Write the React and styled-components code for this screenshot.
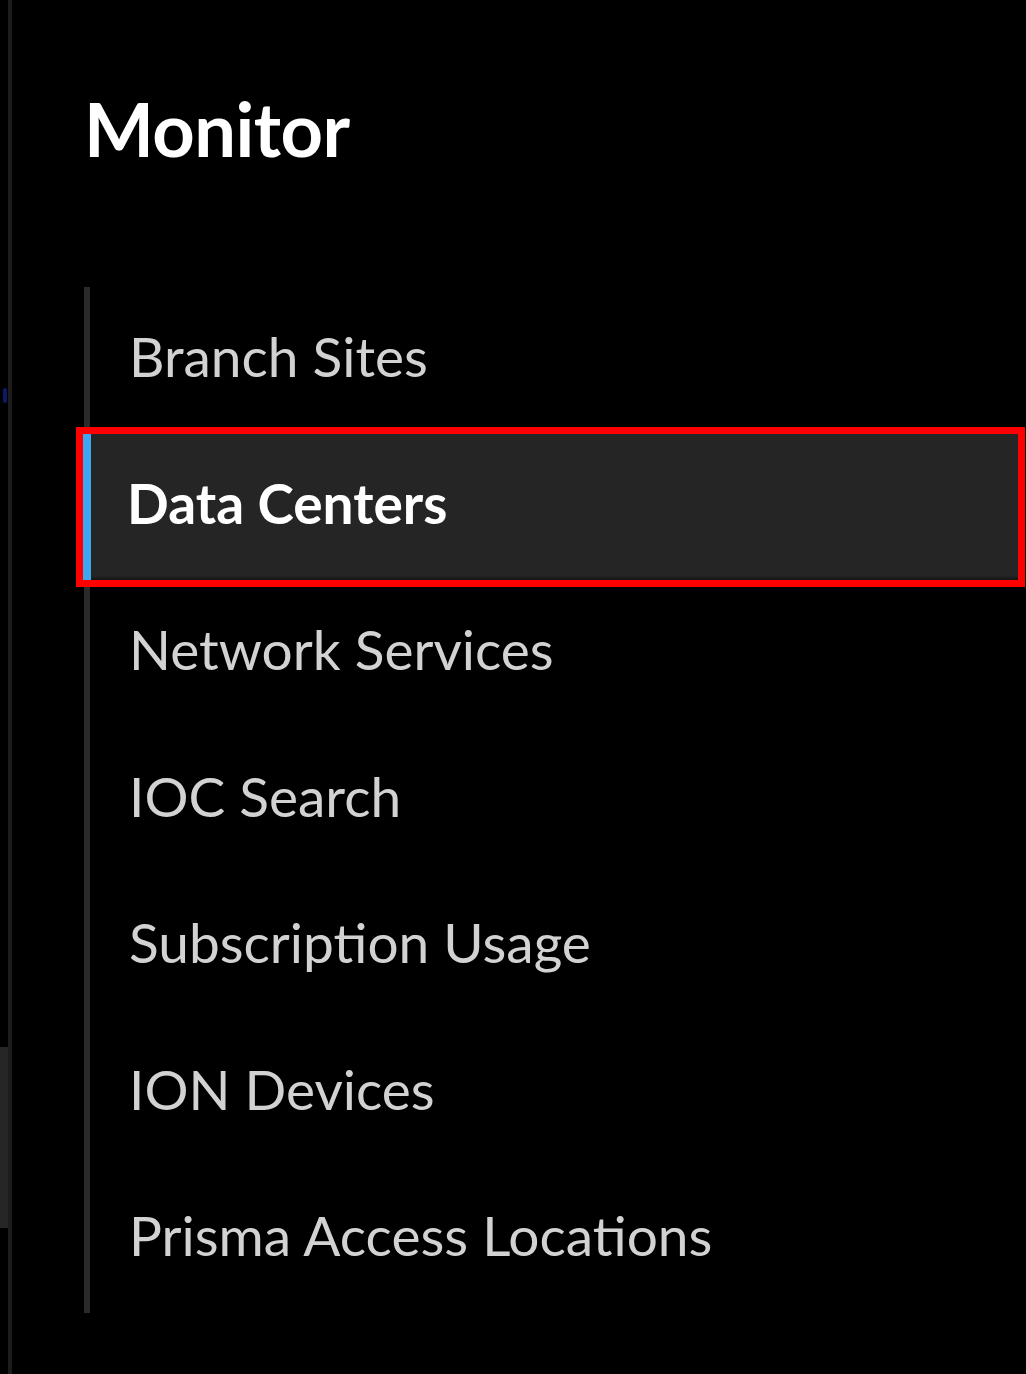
import React from "react";
import styled, { createGlobalStyle } from "styled-components";

const GlobalStyle = createGlobalStyle`
  html, body {
    margin: 0;
    padding: 0;
    background: #000;
  }
  body {
    font-family: Lato, "Open Sans", sans-serif;
    -webkit-font-smoothing: antialiased;
  }
`;

const items = [
  "Branch Sites",
  "Data Centers",
  "Network Services",
  "IOC Search",
  "Subscription Usage",
  "ION Devices",
  "Prisma Access Locations",
];

export default function App() {
  const active = "Data Centers";
  return (
    <>
      <GlobalStyle />
      <Page>
        <Gutter>
          <Blip />
          <Thumb />
        </Gutter>
        <Panel>
          <Title>Monitor</Title>
          <Nav>
            {items.map((label) => (
              <Item key={label} $active={label === active}>
                {label}
              </Item>
            ))}
          </Nav>
        </Panel>
      </Page>
    </>
  );
}

const Page = styled.div`
  display: flex;
  width: 1026px;
  height: 1374px;
  background: #000;
  overflow: hidden;
`;

/* thin divider on the far left, with a scrollbar thumb */
const Gutter = styled.div`
  position: relative;
  width: 8px;
  flex: 0 0 8px;
  border-right: 4px solid #1c1c1c;
`;

const Thumb = styled.div`
  position: absolute;
  left: 0;
  top: 1047px;
  width: 8px;
  height: 181px;
  background: #262626;
`;

const Blip = styled.div`
  position: absolute;
  left: 3px;
  top: 388px;
  width: 4px;
  height: 15px;
  border-radius: 2px;
  background: #0c1a6a;
`;

const Panel = styled.div`
  flex: 1;
  display: flex;
  flex-direction: column;
  padding: 0 8px 0 72px;
`;

const Title = styled.h1`
  margin: 86px 0 0 0;
  font-family: Lato, sans-serif;
  font-weight: 700;
  font-size: 74px;
  line-height: 86px;
  color: #fff;
  letter-spacing: -0.5px;
`;

const Nav = styled.ul`
  list-style: none;
  margin: 115px 0 0 0;
  padding: 0;
  border-left: 6px solid #2a2a2a;
`;

const Item = styled.li`
  display: flex;
  align-items: center;
  height: 146.5px;
  box-sizing: border-box;
  margin-left: ${(p) => (p.$active ? "-7px" : "-6px")};
  padding: 0 0 8px ${(p) => (p.$active ? "36px" : "37px")};
  border-left: 8px solid ${(p) => (p.$active ? "#3fa7f0" : "transparent")};
  background: ${(p) =>
    p.$active ? "linear-gradient(#252525 97%, #141414)" : "transparent"};
  outline: ${(p) => (p.$active ? "7px solid #ff0000" : "none")};
  font-family: Lato, sans-serif;
  font-size: 55px;
  font-weight: ${(p) => (p.$active ? 700 : 400)};
  color: ${(p) => (p.$active ? "#ffffff" : "#d2d2d2")};
  white-space: nowrap;
`;
